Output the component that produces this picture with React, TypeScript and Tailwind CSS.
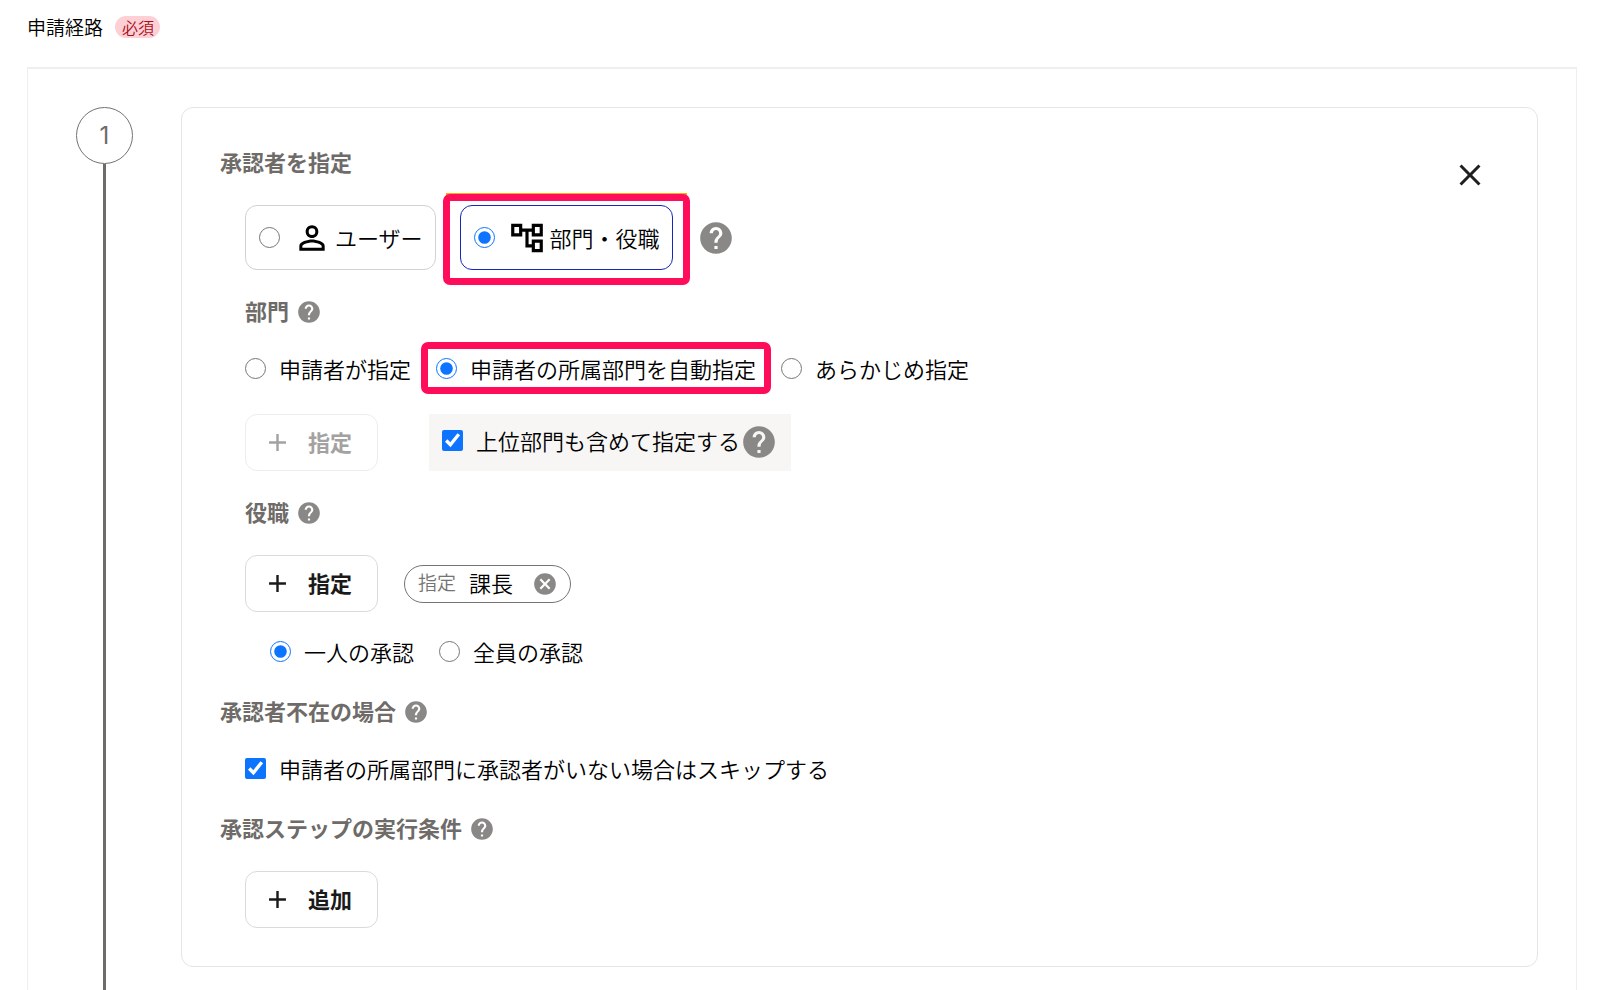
import { useId, useState } from "react";
import type { ReactNode } from "react";
import { MdAdd, MdCancel, MdClose, MdHelp, MdOutlineAccountTree, MdPersonOutline } from "react-icons/md";

function Help({ large = false }: { large?: boolean }) {
  return (
    <button type="button" aria-label="ヘルプ" className="shrink-0 text-[#8a8886]">
      <MdHelp className={large ? "size-[38px]" : "size-[26px]"} />
    </button>
  );
}

function Heading({ children, help = true }: { children: ReactNode; help?: boolean }) {
  return (
    <div className="flex h-[26px] items-center gap-[7px]">
      <h3 className="pb-1 text-[22px] leading-[26px] font-bold text-[#6e6b69]">{children}</h3>
      {help && <Help />}
    </div>
  );
}

type ChoiceProps = {
  type?: "radio" | "checkbox";
  name?: string;
  label: string;
  defaultChecked?: boolean;
};

function Choice({ type = "radio", name, label, defaultChecked }: ChoiceProps) {
  const id = useId();
  return (
    <div className="flex h-[31px] items-center gap-[13px] pb-[2px]">
      <input
        id={id}
        type={type}
        name={name}
        defaultChecked={defaultChecked}
        className="size-[21px] shrink-0 accent-[#0d74ff]"
      />
      <label htmlFor={id} className="pb-[2px] whitespace-nowrap">
        {label}
      </label>
    </div>
  );
}

function Highlight({ className }: { className: string }) {
  return (
    <span
      aria-hidden="true"
      className={`pointer-events-none absolute rounded-[7px] border-[7px] border-[#ff0d5b] ${className}`}
    />
  );
}

function AddButton({ label, disabled }: { label: string; disabled?: boolean }) {
  return (
    <button
      type="button"
      disabled={disabled}
      className="flex h-[57px] items-center gap-4 rounded-xl border border-[#dcdad9] pr-[25px] pl-[17px] font-bold text-[#1a1a1a] disabled:border-[#eeeded] disabled:text-[#a3a2a1]"
    >
      <MdAdd className="size-[29px]" />
      <span className="pb-[3px]">{label}</span>
    </button>
  );
}

function TargetOption(props: {
  icon: ReactNode;
  label: string;
  checked: boolean;
  onSelect: () => void;
}) {
  return (
    <label
      className={`flex h-[65px] items-center rounded-xl border pr-3 pl-[13px] ${
        props.checked ? "border-[#1428bc]" : "border-[#d3d1d1]"
      }`}
    >
      <input
        type="radio"
        name="target"
        checked={props.checked}
        onChange={props.onSelect}
        className="mr-[13px] size-[21px] shrink-0 accent-[#0d74ff]"
      />
      {props.icon}
      <span className="ml-1 pb-[2px] whitespace-nowrap">{props.label}</span>
    </label>
  );
}

export default function App() {
  const [target, setTarget] = useState<"user" | "dept">("dept");

  return (
    <main className="flex h-screen min-h-[600px] flex-col overflow-hidden bg-white pr-[23px] pl-[27px] font-['Noto_Sans_CJK_JP',sans-serif] text-[22px] leading-[30px] font-[350] text-black">
      <header className="flex h-[67px] shrink-0 items-start gap-3 pt-4">
        <h2 className="text-[19px] leading-[22px] font-[350]">申請経路</h2>
        <span className="rounded-full bg-[#fdd0d6] pr-[6px] pl-[7px] text-[16px] leading-[22px] text-[#a80f22]">必須</span>
      </header>

      <section className="flex min-h-0 flex-1 items-stretch border border-b-0 border-t-2 border-[#f1eeef] pr-[38px] pl-12">
        <div className="mr-12 flex w-[57px] shrink-0 flex-col items-center pt-[38px]">
          <span className="flex size-[57px] shrink-0 items-center justify-center rounded-full border border-[#757272] font-['Inter',sans-serif] text-[24px] font-normal text-[#6e6b69]">
            1
          </span>
          <span className="w-[3px] flex-1 bg-[#6e6b69]" />
        </div>

        <div className="flex-1 pt-[38px]">
          <div className="relative flex flex-col gap-[31px] rounded-xl border border-[#e6e5e5] px-[38px] pt-[42px] pb-[38px]">
            <button type="button" aria-label="閉じる" className="absolute top-[49px] right-[49px] text-[#1f1f1f]">
              <MdClose className="size-[36px]" />
            </button>

            <div className="flex flex-col gap-[29px]">
              <Heading help={false}>承認者を指定</Heading>
              <div className="flex items-center gap-6 pl-[25px]">
                <TargetOption
                  icon={<MdPersonOutline className="size-[38px]" />}
                  label="ユーザー"
                  checked={target === "user"}
                  onSelect={() => setTarget("user")}
                />
                <div className="relative">
                  <TargetOption
                    icon={<MdOutlineAccountTree className="size-[38px]" />}
                    label="部門・役職"
                    checked={target === "dept"}
                    onSelect={() => setTarget("dept")}
                  />
                  <span aria-hidden="true" className="absolute -inset-x-[14px] -top-3 h-2 bg-[#ffa70f]" />
                  <Highlight className="-inset-x-[17px] -top-[11px] -bottom-[15px]" />
                </div>
                <Help large />
              </div>

              <div className="pl-[25px]">
                <Heading>部門</Heading>
              </div>
              <div className="flex items-center gap-[25px] pl-[25px]">
                <Choice name="department" label="申請者が指定" />
                <div className="relative">
                  <Choice name="department" label="申請者の所属部門を自動指定" defaultChecked />
                  <Highlight className="-inset-x-[15px] -top-3 -bottom-[9px]" />
                </div>
                <Choice name="department" label="あらかじめ指定" />
              </div>
              <div className="flex items-center gap-[51px] pl-[25px]">
                <AddButton label="指定" disabled />
                <div className="flex h-[57px] items-center bg-[#f7f6f5] px-[13px] pb-[2px]">
                  <Choice type="checkbox" label="上位部門も含めて指定する" defaultChecked />
                  <Help large />
                </div>
              </div>

              <div className="pl-[25px]">
                <Heading>役職</Heading>
              </div>
              <div className="flex flex-col gap-[25px] pl-[25px]">
                <div className="flex items-center gap-[26px]">
                  <AddButton label="指定" />
                  <div className="flex h-[38px] items-center rounded-full border border-[#757373] pr-3 pl-[13px]">
                    <span className="pb-[3px] text-[19px] text-[#767472]">指定</span>
                    <span className="mr-[19px] ml-[13px] pb-[3px]">課長</span>
                    <button type="button" aria-label="課長を削除" className="text-[#8a8886]">
                      <MdCancel className="size-[26px]" />
                    </button>
                  </div>
                </div>
                <div className="flex gap-[25px] pl-[25px]">
                  <Choice name="approval" label="一人の承認" defaultChecked />
                  <Choice name="approval" label="全員の承認" />
                </div>
              </div>
            </div>

            <div className="flex flex-col gap-[29px]">
              <Heading>承認者不在の場合</Heading>
              <div className="pl-[25px]">
                <Choice type="checkbox" label="申請者の所属部門に承認者がいない場合はスキップする" defaultChecked />
              </div>
            </div>

            <div className="flex flex-col gap-[29px]">
              <Heading>承認ステップの実行条件</Heading>
              <div className="flex pl-[25px]">
                <AddButton label="追加" />
              </div>
            </div>
          </div>
        </div>
      </section>
    </main>
  );
}
